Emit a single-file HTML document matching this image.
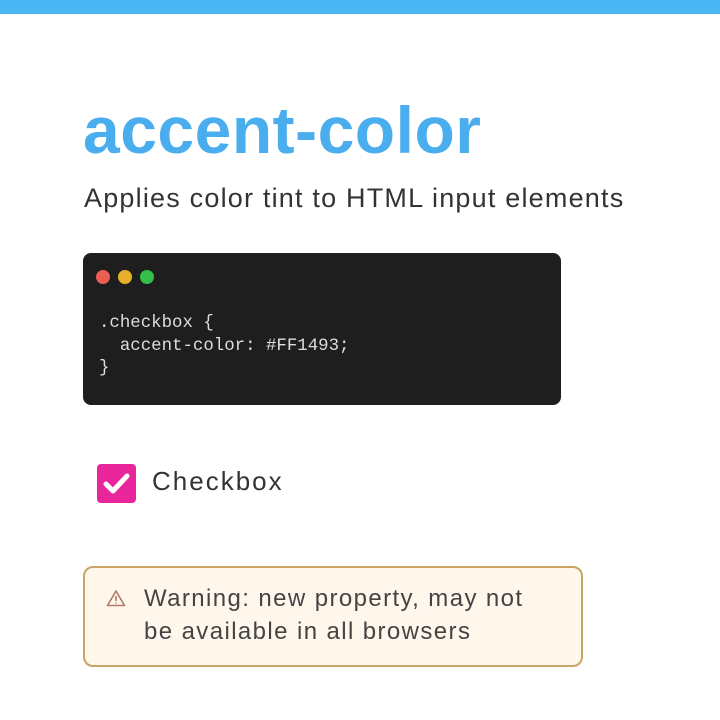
<!DOCTYPE html>
<html><head><style>
body{margin:0;width:720px;height:720px;background:#fff;position:relative;overflow:hidden;font-family:"Liberation Sans",sans-serif}
.bar{position:absolute;left:0;top:0;width:720px;height:14px;background:#4ab6f4}
.t{position:absolute;left:83px;top:90px;font-size:66px;font-weight:bold;color:#4aaeee;letter-spacing:0.5px;line-height:80px}
.s{position:absolute;left:84px;top:182px;font-size:27px;letter-spacing:1.2px;color:#333;line-height:32px}
.code{position:absolute;left:83px;top:253px;width:478px;height:152px;background:#1e1e1e;border-radius:8px}
.d{position:absolute;top:270px;width:14px;height:14px;border-radius:50%}
pre{position:absolute;left:99px;top:313px;margin:0;font-family:"Liberation Mono",monospace;font-size:17.4px;line-height:22.5px;color:#ddd}
.cb{position:absolute;left:97px;top:464px;width:39px;height:39px;background:#e8259a;border-radius:4px}
.cl{position:absolute;left:152px;top:466px;font-size:26px;letter-spacing:2px;color:#333}
.w{position:absolute;left:83px;top:566px;width:496px;height:97px;border:2px solid #c9a466;border-radius:10px;background:#fff6ec}
.wt{position:absolute;left:144px;top:582px;font-size:24px;letter-spacing:1.4px;line-height:33px;color:#444}
</style></head><body>
<div class="bar"></div>
<div class="t">accent-color</div>
<div class="s">Applies color tint to HTML input elements</div>
<div class="code"></div>
<div class="d" style="left:96px;background:#ec5d52"></div>
<div class="d" style="left:118px;background:#e6b12a"></div>
<div class="d" style="left:140px;background:#34bf48"></div>
<pre>.checkbox {
  accent-color: #FF1493;
}</pre>
<div class="cb"><svg width="39" height="39" viewBox="0 0 39 39"><path d="M9 20l7 7 14-15" fill="none" stroke="#fff" stroke-width="5" stroke-linecap="round" stroke-linejoin="round"/></svg></div>
<div class="cl">Checkbox</div>
<div class="w"></div>
<svg style="position:absolute;left:106px;top:589px" width="20" height="18" viewBox="0 0 20 18"><path d="M10 2L1.5 16.5h17z" fill="none" stroke="#b07a6a" stroke-width="1.6" stroke-linejoin="round"/><path d="M10 7v5M10 13.5v1" stroke="#b07a6a" stroke-width="1.6"/></svg>
<div class="wt">Warning: new property, may not<br>be available in all browsers</div>
</body></html>
